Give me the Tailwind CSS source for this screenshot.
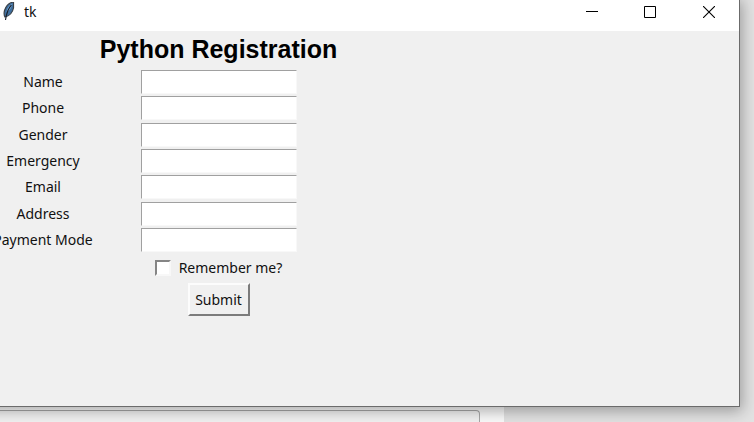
<!DOCTYPE html>
<html lang="en">
<head>
<meta charset="utf-8">
<title>tk</title>
<script src="https://cdn.jsdelivr.net/npm/@tailwindcss/browser@4"></script>
</head>
<body class="relative flex h-screen flex-col overflow-hidden bg-[#e2e2e2] font-['Noto_Sans','Open_Sans',sans-serif] text-sm text-[#111]">
  <!-- Window lying behind the form -->
  <div class="absolute bottom-0 left-0 h-6 w-[504px] bg-[#fafafa] pt-3 pr-6">
    <div class="h-full rounded-tr-sm border-t border-r border-[#a8a8a8] bg-[#f2f2f2]"></div>
  </div>

  <main class="relative mr-3.5 -ml-8 mb-[15px] flex min-h-0 flex-1 flex-col border-r border-b border-[#6b6b6b] bg-[#f0f0f0] shadow-[0_2px_14px_2px_rgba(0,0,0,0.32)]">
    <header class="flex h-[31px] shrink-0 items-start bg-white pl-8">
      <svg class="mt-0.5 ml-0.5 h-[19px] w-[13px] shrink-0" viewBox="0 0 13 19" aria-hidden="true">
        <path d="M11.500 0C7.500 .5 4 4 2.500 8.500C1.800 11.500 2 13.500 3 15C7 14 10.500 11 11.500 6Z" fill="#3f6f9f" stroke="#3a4148" stroke-width="1.200"/>
        <path d="M10.500 1.500C7 3 5 6 4.500 10.500C7 9 9.500 6 10.500 1.500Z" fill="#7fb2e2"/>
        <path d="M9.500 3C6.500 6 4.500 10.500 3.500 18" fill="none" stroke="#1a222e" stroke-width="1.100"/>
      </svg>
      <h1 class="mt-0.5 ml-[9px] flex-1 leading-5">tk</h1>
      <button class="flex h-[23px] w-[58px] items-center justify-center" aria-label="Minimize">
        <svg class="h-3 w-3" viewBox="0 0 12 12" fill="none" stroke="#000"><path d="M0 5.500H12"/></svg>
      </button>
      <button class="flex h-6 w-[58px] items-center justify-center" aria-label="Maximize">
        <svg class="h-3 w-3" viewBox="0 0 12 12" fill="none" stroke="#000"><path d="M.5.5H11.500V11.500H.5Z"/></svg>
      </button>
      <button class="flex h-6 w-[60px] items-center justify-center" aria-label="Close">
        <svg class="h-3 w-3" viewBox="0 0 12 12" fill="none" stroke="#000" stroke-width="1.100"><path d="M0 0L12 12M12 0L0 12"/></svg>
      </button>
    </header>

    <form class="ml-5 flex w-[351px] flex-col">
      <h2 class="ml-[110px] h-[38px] pt-1 text-center font-['Liberation_Sans',Arial,sans-serif] text-[25px] leading-7 font-bold whitespace-nowrap text-black">Python Registration</h2>
      <div class="grid h-[184px] grid-cols-[110px_1fr] grid-rows-7 items-center justify-items-center">
        <label for="name">Name</label>
        <input id="name" type="text" class="h-6 w-[156px] border border-t-[#a0a0a0] border-r-[#f8f8f8] border-b-[#f8f8f8] border-l-[#a0a0a0] bg-white px-1 outline-none">
        <label for="phone">Phone</label>
        <input id="phone" type="text" class="h-6 w-[156px] border border-t-[#a0a0a0] border-r-[#f8f8f8] border-b-[#f8f8f8] border-l-[#a0a0a0] bg-white px-1 outline-none">
        <label for="gender">Gender</label>
        <input id="gender" type="text" class="h-6 w-[156px] border border-t-[#a0a0a0] border-r-[#f8f8f8] border-b-[#f8f8f8] border-l-[#a0a0a0] bg-white px-1 outline-none">
        <label for="emergency">Emergency</label>
        <input id="emergency" type="text" class="h-6 w-[156px] border border-t-[#a0a0a0] border-r-[#f8f8f8] border-b-[#f8f8f8] border-l-[#a0a0a0] bg-white px-1 outline-none">
        <label for="email">Email</label>
        <input id="email" type="text" class="h-6 w-[156px] border border-t-[#a0a0a0] border-r-[#f8f8f8] border-b-[#f8f8f8] border-l-[#a0a0a0] bg-white px-1 outline-none">
        <label for="address">Address</label>
        <input id="address" type="text" class="h-6 w-[156px] border border-t-[#a0a0a0] border-r-[#f8f8f8] border-b-[#f8f8f8] border-l-[#a0a0a0] bg-white px-1 outline-none">
        <label for="payment" class="whitespace-nowrap">Payment Mode</label>
        <input id="payment" type="text" class="h-6 w-[156px] border border-t-[#a0a0a0] border-r-[#f8f8f8] border-b-[#f8f8f8] border-l-[#a0a0a0] bg-white px-1 outline-none">
      </div>
      <div class="ml-[110px] flex h-[30px] items-center justify-center gap-2">
        <input id="remember" type="checkbox" class="h-4 w-4 appearance-none border-2 border-t-[#858585] border-r-[#f8f8f8] border-b-[#f8f8f8] border-l-[#858585] bg-white">
        <label for="remember">Remember me?</label>
      </div>
      <div class="ml-[110px] flex justify-center">
        <button type="button" class="h-[33px] w-[62px] border-2 border-t-[#fcfcfc] border-r-[#7c7c7c] border-b-[#7c7c7c] border-l-[#fcfcfc] bg-[#f0f0f0]">Submit</button>
      </div>
    </form>
  </main>
</body>
</html>
